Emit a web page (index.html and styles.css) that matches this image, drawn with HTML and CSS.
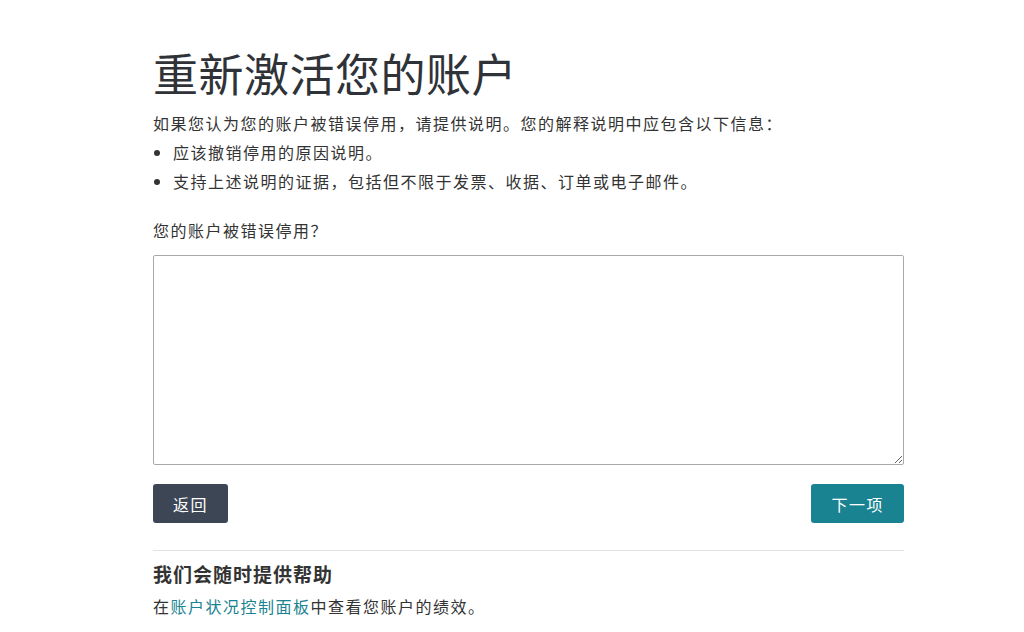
FILE: index.html
```html
<!DOCTYPE html>
<html lang="zh-CN">
<head>
    <meta charset="UTF-8">
    <meta name="viewport" content="width=device-width, initial-scale=1.0">
    <title>重新激活您的账户</title>
    <link rel="stylesheet" href="styles.css">
</head>
<body>

<div class="container">
    <h1>重新激活您的账户</h1>

    <p class="intro">如果您认为您的账户被错误停用，请提供说明。您的解释说明中应包含以下信息：</p>
    <ul class="reasons">
        <li>应该撤销停用的原因说明。</li>
        <li>支持上述说明的证据，包括但不限于发票、收据、订单或电子邮件。</li>
    </ul>

    <form class="appeal-form">
        <label for="appeal-text">您的账户被错误停用？</label>
        <textarea id="appeal-text" name="appeal"></textarea>

        <div class="actions">
            <button type="button" class="btn btn-back">返回</button>
            <button type="submit" class="btn btn-next">下一项</button>
        </div>
    </form>

    <div class="help">
        <h2>我们会随时提供帮助</h2>
        <p>在<a href="#">账户状况控制面板</a>中查看您账户的绩效。</p>
    </div>
</div>

</body>
</html>
```

FILE: styles.css
```css
body {
    font-family: "Noto Sans CJK SC", "Noto Sans", sans-serif;
    margin: 0;
    padding: 0;
    background-color: #fff;
    color: #333;
}

.container {
    width: 751px;
    margin-left: 153px;
    padding-top: 40px;
}

h1 {
    font-size: 45px;
    font-weight: 400;
    letter-spacing: 0.5px;
    color: #2f3338;
    margin: 0 0 3px 0;
    line-height: 66px;
}

.intro {
    font-size: 16px;
    letter-spacing: 1.5px;
    line-height: 29px;
    margin: 0;
}

.reasons {
    margin: 0;
    padding: 0 0 0 20px;
    font-size: 16px;
    letter-spacing: 1.5px;
    line-height: 29px;
}

.appeal-form {
    margin-top: 20px;
}

.appeal-form label {
    display: block;
    font-size: 16px;
    letter-spacing: 1.5px;
    line-height: 29px;
    margin-bottom: 10px;
}

.appeal-form textarea {
    display: block;
    box-sizing: border-box;
    width: 100%;
    height: 210px;
    border: 1px solid #a9a9a9;
    border-radius: 2px;
    margin: 0;
}

.actions {
    display: flex;
    justify-content: space-between;
    margin-top: 19px;
}

.btn {
    font-family: inherit;
    font-size: 16px;
    letter-spacing: 1.5px;
    color: #fff;
    border: none;
    border-radius: 3px;
    height: 39px;
    padding: 0 20px;
    cursor: pointer;
}

.btn-back {
    background-color: #3d4655;
}

.btn-next {
    background-color: #1a8391;
}

.help {
    margin-top: 27px;
    border-top: 1px solid #e3e3e3;
    padding-top: 9px;
}

.help h2 {
    font-size: 19px;
    letter-spacing: 1px;
    font-weight: 700;
    margin: 0;
    line-height: 28px;
}

.help p {
    font-size: 16px;
    letter-spacing: 1.5px;
    line-height: 29px;
    margin: 4px 0 0 0;
}

.help a {
    color: #1a8391;
    text-decoration: none;
}
```
